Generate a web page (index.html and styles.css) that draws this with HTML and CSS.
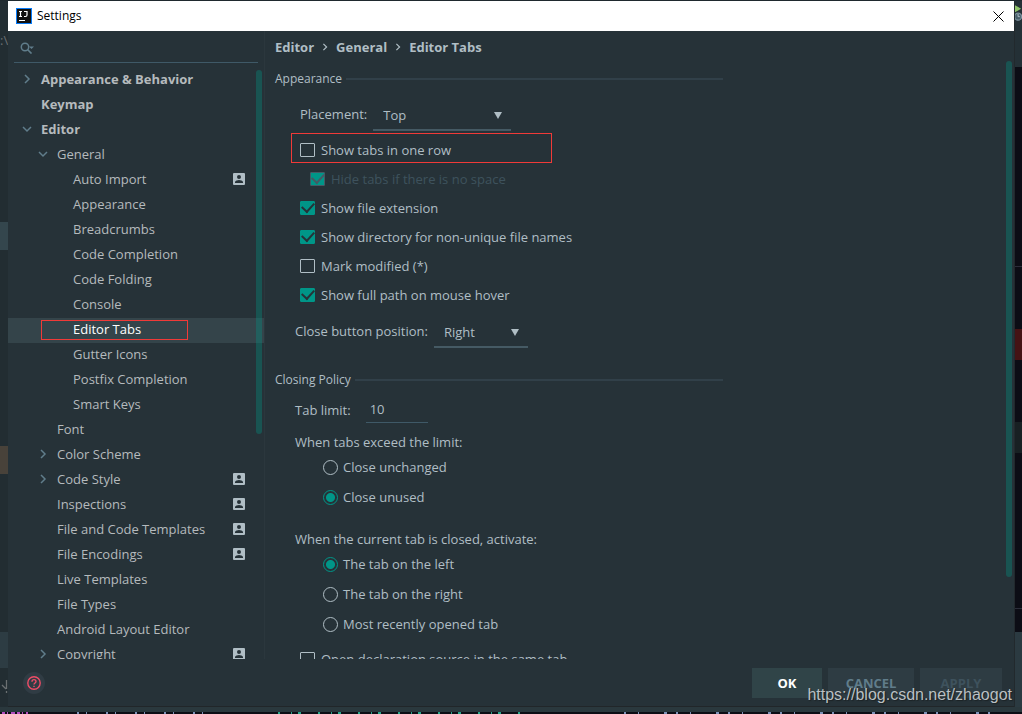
FILE: index.html
```html
<!DOCTYPE html>
<html lang="en">
<head>
<meta charset="utf-8">
<title>Settings</title>
<link rel="stylesheet" href="styles.css">
</head>
<body>
<svg class="defs" aria-hidden="true">
  <symbol id="right" viewBox="0 0 10 10"><path d="M3 1l4 4-4 4" fill="none" stroke="currentColor" stroke-width="1.5"/></symbol>
  <symbol id="down" viewBox="0 0 10 10"><path d="M1 3l4 4 4-4" fill="none" stroke="currentColor" stroke-width="1.5"/></symbol>
  <symbol id="person" viewBox="0 0 12 12"><path fill="currentColor" fill-rule="evenodd" d="M1 0h10a1 1 0 0 1 1 1v10a1 1 0 0 1-1 1H1a1 1 0 0 1-1-1V1a1 1 0 0 1 1-1zM6 2a2 2 0 1 0 0 4 2 2 0 0 0 0-4zM2 10h8V9c0-1.300-2.700-2-4-2s-4 .7-4 2z"/></symbol>
</svg>
<div class="desktop">
  <div class="edge left">
    <span class="drive">:\</span>
    <i class="tab"></i><i class="mark"></i><i class="bar"></i>
    <svg class="pull" viewBox="0 0 8 14"><path d="M6.500 0v9M2 5l4 4M6.500 11v2" fill="none" stroke="#6b7072" stroke-width="1.300"/></svg>
  </div>
  <main class="dialog">
    <header class="titlebar">
      <svg class="logo" viewBox="0 0 16 16"><rect width="16" height="16" fill="#087cfa"/><rect x="1" y="1" width="14" height="14" fill="#111"/><path d="M3 3.500h3M4.500 3.500v5M3 8.500h3M8 3.500h3v3.500q0 1.500-1.500 1.500h-1.500M3 12.500h6" fill="none" stroke="#fff" stroke-width="1.200"/></svg>
      <h1>Settings</h1>
      <button class="close" type="button" aria-label="Close"><svg viewBox="0 0 11 11"><path d="M.5.5l10 10M10.500.5l-10 10" stroke="#000" stroke-width="1"/></svg></button>
    </header>
    <div class="body">
      <nav class="side">
        <label class="search">
          <svg viewBox="0 0 14 12"><circle cx="5" cy="5" r="3.700" fill="none" stroke="currentColor" stroke-width="1.500"/><path d="M7.500 7.500l4 4" stroke="currentColor" stroke-width="1.700"/><path d="M9 4.500h5L11.500 7z" fill="currentColor"/></svg>
          <input type="search" aria-label="Search settings">
        </label>
        <ul class="tree">
          <li class="top"><svg class="chev"><use href="#right"/></svg><span>Appearance &amp; Behavior</span></li>
          <li class="top"><span>Keymap</span></li>
          <li class="top"><svg class="chev"><use href="#down"/></svg><span>Editor</span></li>
          <li class="l2"><svg class="chev"><use href="#down"/></svg><span>General</span></li>
          <li class="l3"><span>Auto Import</span><svg class="person"><use href="#person"/></svg></li>
          <li class="l3"><span>Appearance</span></li>
          <li class="l3"><span>Breadcrumbs</span></li>
          <li class="l3"><span>Code Completion</span></li>
          <li class="l3"><span>Code Folding</span></li>
          <li class="l3"><span>Console</span></li>
          <li class="l3 selected"><span>Editor Tabs</span><i class="note"></i></li>
          <li class="l3"><span>Gutter Icons</span></li>
          <li class="l3"><span>Postfix Completion</span></li>
          <li class="l3"><span>Smart Keys</span></li>
          <li class="l2"><span>Font</span></li>
          <li class="l2"><svg class="chev"><use href="#right"/></svg><span>Color Scheme</span></li>
          <li class="l2"><svg class="chev"><use href="#right"/></svg><span>Code Style</span><svg class="person"><use href="#person"/></svg></li>
          <li class="l2"><span>Inspections</span><svg class="person"><use href="#person"/></svg></li>
          <li class="l2"><span>File and Code Templates</span><svg class="person"><use href="#person"/></svg></li>
          <li class="l2"><span>File Encodings</span><svg class="person"><use href="#person"/></svg></li>
          <li class="l2"><span>Live Templates</span></li>
          <li class="l2"><span>File Types</span></li>
          <li class="l2"><span>Android Layout Editor</span></li>
          <li class="l2"><svg class="chev"><use href="#right"/></svg><span>Copyright</span><svg class="person"><use href="#person"/></svg></li>
        </ul>
        <i class="thumb side-thumb"></i>
      </nav>
      <section class="content">
        <div class="crumbs"><b>Editor</b><svg><use href="#right"/></svg><b>General</b><svg><use href="#right"/></svg><b>Editor Tabs</b></div>
        <form class="form">
          <h2>Appearance</h2>
          <div class="field placement">
            <label for="placement">Placement:</label>
            <div class="select wide"><select id="placement"><option>Top</option><option>Bottom</option><option>Left</option><option>Right</option></select><svg viewBox="0 0 8 7"><path d="M0 0h8L4 7z" fill="currentColor"/></svg></div>
          </div>
          <div class="checks">
            <label class="check"><input type="checkbox"><span>Show tabs in one row</span><i class="note"></i></label>
            <label class="check nested"><input type="checkbox" checked disabled><span>Hide tabs if there is no space</span></label>
            <label class="check"><input type="checkbox" checked><span>Show file extension</span></label>
            <label class="check"><input type="checkbox" checked><span>Show directory for non-unique file names</span></label>
            <label class="check"><input type="checkbox"><span>Mark modified (*)</span></label>
            <label class="check"><input type="checkbox" checked><span>Show full path on mouse hover</span></label>
          </div>
          <div class="field position">
            <label for="position">Close button position:</label>
            <div class="select"><select id="position"><option>Right</option><option>Left</option><option>None</option></select><svg viewBox="0 0 8 7"><path d="M0 0h8L4 7z" fill="currentColor"/></svg></div>
          </div>
          <h2 class="policy">Closing Policy</h2>
          <div class="field limit">
            <label for="limit">Tab limit:</label>
            <input id="limit" type="text" value="10">
          </div>
          <fieldset class="first">
            <legend>When tabs exceed the limit:</legend>
            <label class="radio"><input type="radio" name="exceed"><span>Close unchanged</span></label>
            <label class="radio"><input type="radio" name="exceed" checked><span>Close unused</span></label>
          </fieldset>
          <fieldset class="second">
            <legend>When the current tab is closed, activate:</legend>
            <label class="radio"><input type="radio" name="activate" checked><span>The tab on the left</span></label>
            <label class="radio"><input type="radio" name="activate"><span>The tab on the right</span></label>
            <label class="radio"><input type="radio" name="activate"><span>Most recently opened tab</span></label>
          </fieldset>
          <label class="check last"><input type="checkbox"><span>Open declaration source in the same tab</span></label>
        </form>
        <i class="thumb content-thumb"></i>
      </section>
    </div>
    <footer class="footer">
      <button class="help" type="button" aria-label="Help"><svg viewBox="0 0 14 14"><circle cx="7" cy="7" r="6.200" fill="none" stroke="currentColor" stroke-width="1.400"/><path d="M5 5.700c0-2.800 4-2.600 4-.2C9 7 7 7 7 8.600M7 9.700v1.400" fill="none" stroke="currentColor" stroke-width="1.400"/></svg></button>
      <button class="btn ok" type="button">OK</button>
      <button class="btn cancel" type="button">CANCEL</button>
      <button class="btn apply" type="button" disabled>APPLY</button>
    </footer>
  </main>
  <div class="edge right">
    <svg class="run" viewBox="0 0 8 20"><path d="M0 0l7 4-7 4z" fill="#8fc46a"/><circle cx="3.500" cy="13" r="4" fill="#49606b" stroke="#7d93a0" stroke-width="1.500"/><path d="M3.500 10v3h2" fill="none" stroke="#b8c7d0"/></svg>
    <i class="line"></i><i class="error"></i><i class="stripe"></i><i class="line low"></i><i class="panel"></i>
  </div>
  <div class="under">
    <svg class="code" aria-hidden="true" fill="none" stroke-width="2">
      <path d="M2 6h26" stroke="#b44fc0" stroke-dasharray="3 2 1 3 4 2"/>
      <path d="M77 6h140" stroke="#7c92b8" stroke-dasharray="2 7 1 19"/>
      <path d="M278 6h245" stroke="#2aa58c" stroke-dasharray="2 11 1 6 3 17"/>
      <path d="M624 6h370" stroke="#7c92b8" stroke-dasharray="2 12 1 25 3 9"/>
    </svg>
  </div>
  <div class="watermark">https://blog.csdn.net/zhaogot</div>
</div>
</body>
</html>
```
FILE: styles.css
```css
* { box-sizing: border-box; }
body { margin: 0; background: #1f292e; color: #b0bec5; font: 13px/18px "Open Sans", "Noto Sans", sans-serif; }
.defs { display: none; }
svg { display: block; flex: none; }
button, input, select { font: inherit; color: inherit; border: 0; padding: 0; margin: 0; background: none; border-radius: 0; outline: 0; }
.desktop { position: relative; display: grid; grid-template: minmax(0, 1fr) 7px / 8px minmax(0, 1fr) 8px; height: 100vh; padding-top: 1px; overflow: hidden; }
.dialog { display: flex; flex-direction: column; min-width: 0; background: #263238; border-bottom: 1px solid #212629; }

/* editor window behind the dialog */
.edge { display: flex; flex-direction: column; overflow: hidden; }
.edge i { flex: none; }
.left { background: #222d32; }
.drive { height: 221px; padding-top: 30px; color: #6b7072; }
.tab { height: 28px; background: #34464d; }
.mark { height: 28px; margin-top: 196px; background: #48423a; }
.bar { height: 36px; margin-top: 158px; background: #2d3c43; }
.pull { width: 8px; height: 14px; margin-top: 12px; }
.right { background: linear-gradient(#243036 66px, #0c0d15 66px); border-left: 1px solid #22292d; }
.run { width: 7px; height: 20px; margin: 3px 0 242px; }
.line { height: 1px; background: #2b2d39; }
.error { height: 31px; margin-top: 62px; background: #451314; }
.stripe { height: 31px; margin-top: 62px; background: #182023; }
.edge .low { margin-top: 155px; }
.panel { flex: 1 0 auto; margin-top: 23px; background: #2b3a41; }
.edge .panel { flex: 1 0 auto; }
.under { grid-column: 1 / -1; background: linear-gradient(#2a383d 5px, #0c0d15 5px); }
.code { width: 100%; height: 7px; }

.titlebar { display: flex; align-items: center; height: 30px; flex: none; padding: 0 10px 0 8px; gap: 5px; background: #fff; color: #000; }
.logo { width: 16px; height: 16px; }
.titlebar h1 { flex: 1; margin: 0; font-size: 12px; font-weight: 400; }
.close svg { width: 11px; height: 11px; }

.body { display: flex; flex: 1; min-height: 0; }
.side { position: relative; flex: none; width: 256px; overflow: hidden; }
.search { display: flex; align-items: center; gap: 6px; height: 32px; margin: 0 6px; padding: 3px 6px 0; border-bottom: 1px solid #3f5967; color: #607d8b; }
.search svg { width: 14px; height: 12px; }
.search input { flex: 1; min-width: 0; }
.tree { margin: 5px 0 0; padding: 0; list-style: none; color: #b5babd; }
.tree li { position: relative; display: grid; grid-template-columns: 16px 1fr 12px; align-items: center; height: 25px; padding: 0 19px 4px 17px; }
.tree li.l2 { padding-left: 33px; }
.tree li.l3 { padding-left: 49px; }
.tree span { grid-column: 2; white-space: nowrap; }
.tree .top { font-weight: 700; }
.chev { grid-column: 1; grid-row: 1; width: 10px; height: 10px; margin-left: -3px; color: #607d8b; }
.person { grid-column: 3; grid-row: 1; width: 12px; height: 12px; color: #b0bec5; }
.tree .selected { background: #34444a; color: #fff; }
.note { position: absolute; border: 1px solid #f03a38; }
.selected .note { inset: 2px auto 3px 33px; width: 147px; }
.thumb { position: absolute; width: 6px; border-radius: 3px; background: rgba(0, 150, 136, .34); }
.side-thumb { top: 39px; right: 2px; height: 364px; }
.content-thumb { top: 30px; right: 2px; height: 516px; }

.content { position: relative; flex: 1; min-width: 0; padding: 0 10px; border-left: 1px solid #2b373d; overflow: hidden; }
.crumbs { display: flex; align-items: center; gap: 7px; height: 32px; }
.crumbs svg { width: 8px; height: 8px; }
.form { max-width: 448px; }
.form h2 { display: flex; align-items: center; gap: 4px; height: 32px; margin: 0; font-size: 12px; font-weight: 400; }
.form h2::after { content: ""; flex: 1; height: 2px; background: #314049; }
.field { display: flex; align-items: center; }
.placement { gap: 6px; margin: 5px 0 4px 25px; }
.placement label { padding-bottom: 4px; }
.position { gap: 6px; margin: 8px 0 0 20px; }
.position label { padding-bottom: 4px; }
.select { position: relative; width: 94px; border-bottom: 2px solid #455a64; }
.wide { width: 138px; }
.select select { display: block; width: 100%; height: 29px; padding: 0 24px 0 10px; appearance: none; }
.select svg { position: absolute; right: 9px; top: 12px; width: 8px; height: 7px; pointer-events: none; }
.form .policy { margin-top: 16px; }
.limit { gap: 15px; height: 27px; margin-left: 20px; }
.limit input { width: 62px; height: 27px; padding: 0 4px; border-bottom: 1px solid #3f5967; }

.check { position: relative; display: flex; align-items: center; gap: 6px; height: 29px; margin-left: 25px; white-space: nowrap; }
.nested { margin-left: 35px; color: #3e525d; }
.check .note { inset: -2px auto 1px -9px; width: 261px; }
.check input { appearance: none; display: grid; place-items: center; width: 15px; height: 14px; border: 1px solid #b0bec5; border-radius: 1px; }
.check input:checked { background: #009688; border-color: #009688; }
.check input:checked::after { content: ""; width: 6px; height: 10px; margin-top: -3px; border: solid #263238; border-width: 0 2px 2px 0; transform: rotate(42deg); }
.check input:checked:disabled { border-color: #455a64; }
.check input:checked:disabled::after { border-color: #455a64; }
fieldset { margin: 0 0 0 20px; padding: 0; border: 0; }
legend { height: 20px; padding: 0; line-height: 20px; }
.first { margin-top: 9px; }
.second { margin-top: 17px; }
.radio { display: flex; align-items: center; gap: 5px; height: 30px; padding-left: 28px; }
.radio input { appearance: none; width: 15px; height: 15px; border: 1px solid #b0bec5; border-radius: 50%; }
.radio input:checked { border-color: #009688; background: radial-gradient(circle, #009688 4px, transparent 5px); }
.last { margin-top: 5px; }

.footer { display: flex; flex: none; align-items: flex-start; gap: 6px; height: 47px; padding: 9px 12px 0 15px; }
.help { display: grid; place-items: center; width: 22px; height: 22px; margin: 4px auto 0 0; border-radius: 50%; background: #303c44; color: #ee4d67; }
.help svg { width: 14px; height: 14px; }
.btn { height: 30px; background: #2e3c43; font-weight: 700; }
.ok { width: 70px; background: #304448; color: #fff; }
.cancel { width: 86px; color: #607d8b; }
.apply { width: 82px; color: #3e525d; }
.watermark { position: absolute; right: 10px; bottom: 10px; color: rgba(215, 220, 222, .85); font: 16px/18px "Liberation Sans", Arial, sans-serif; text-shadow: 1px 1px 1px #1b2225; pointer-events: none; }
```
